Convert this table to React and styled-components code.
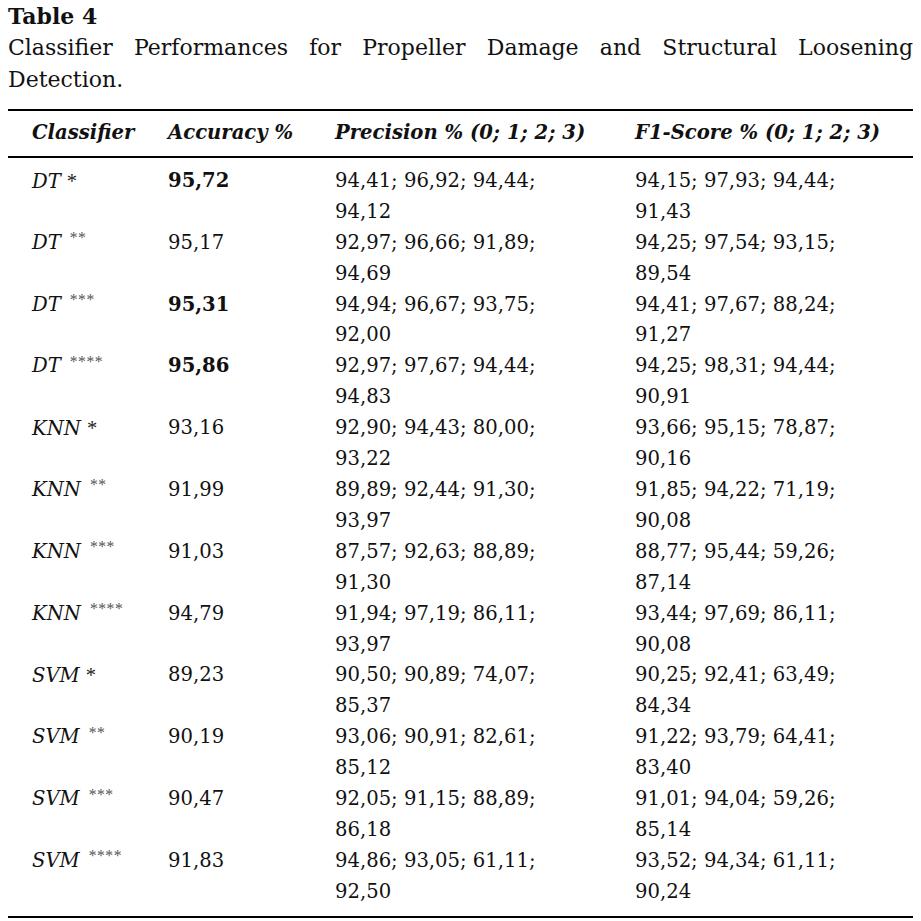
import React from "react";
import styled, { createGlobalStyle } from "styled-components";

const GlobalStyle = createGlobalStyle`
  html, body {
    margin: 0;
    padding: 0;
    background: #fff;
  }
  body {
    font-family: "DejaVu Serif", "Liberation Serif", serif;
    color: #111;
  }
`;

const rows = [
  { name: "DT", stars: 1, acc: "95,72", best: true, prec: ["94,41; 96,92; 94,44;", "94,12"], f1: ["94,15; 97,93; 94,44;", "91,43"] },
  { name: "DT", stars: 2, acc: "95,17", prec: ["92,97; 96,66; 91,89;", "94,69"], f1: ["94,25; 97,54; 93,15;", "89,54"] },
  { name: "DT", stars: 3, acc: "95,31", best: true, prec: ["94,94; 96,67; 93,75;", "92,00"], f1: ["94,41; 97,67; 88,24;", "91,27"] },
  { name: "DT", stars: 4, acc: "95,86", best: true, prec: ["92,97; 97,67; 94,44;", "94,83"], f1: ["94,25; 98,31; 94,44;", "90,91"] },
  { name: "KNN", stars: 1, acc: "93,16", prec: ["92,90; 94,43; 80,00;", "93,22"], f1: ["93,66; 95,15; 78,87;", "90,16"] },
  { name: "KNN", stars: 2, acc: "91,99", prec: ["89,89; 92,44; 91,30;", "93,97"], f1: ["91,85; 94,22; 71,19;", "90,08"] },
  { name: "KNN", stars: 3, acc: "91,03", prec: ["87,57; 92,63; 88,89;", "91,30"], f1: ["88,77; 95,44; 59,26;", "87,14"] },
  { name: "KNN", stars: 4, acc: "94,79", prec: ["91,94; 97,19; 86,11;", "93,97"], f1: ["93,44; 97,69; 86,11;", "90,08"] },
  { name: "SVM", stars: 1, acc: "89,23", prec: ["90,50; 90,89; 74,07;", "85,37"], f1: ["90,25; 92,41; 63,49;", "84,34"] },
  { name: "SVM", stars: 2, acc: "90,19", prec: ["93,06; 90,91; 82,61;", "85,12"], f1: ["91,22; 93,79; 64,41;", "83,40"] },
  { name: "SVM", stars: 3, acc: "90,47", prec: ["92,05; 91,15; 88,89;", "86,18"], f1: ["91,01; 94,04; 59,26;", "85,14"] },
  { name: "SVM", stars: 4, acc: "91,83", prec: ["94,86; 93,05; 61,11;", "92,50"], f1: ["93,52; 94,34; 61,11;", "90,24"] },
];

const Page = styled.div`
  padding: 1px 8px 0;
  width: 905px;
`;

const Title = styled.div`
  font-size: 22px;
  font-weight: bold;
  line-height: 31px;
`;

const CaptionLine = styled.div`
  font-size: 22px;
  line-height: 31.5px;
  text-align: ${(p) => (p.$justify ? "justify" : "left")};
  text-align-last: ${(p) => (p.$justify ? "justify" : "left")};
  white-space: nowrap;
`;

const Table = styled.table`
  margin-top: 14px;
  width: 905px;
  border-collapse: collapse;
  table-layout: fixed;
  font-size: 19.6px;
  line-height: 30.9px;
  border-top: 2px solid #000;
  border-bottom: 2px solid #000;

  tbody tr:first-child td {
    padding-top: 8px;
  }
  tbody tr:last-child td {
    padding-bottom: 8px;
  }
`;

const Head = styled.th`
  text-align: left;
  font-style: italic;
  font-weight: bold;
  padding: 7px 0 7px 24px;
  border-bottom: 2px solid #000;
  white-space: nowrap;
`;

const Cell = styled.td`
  vertical-align: top;
  padding: 0 0 0 24px;
  font-weight: ${(p) => (p.$bold ? "bold" : "normal")};
  white-space: nowrap;
`;

const Name = styled.span`
  font-style: italic;
`;

const Star = styled.span`
  font-family: "Liberation Serif", serif;
  font-size: 1.05em;
  margin-left: 6px;
  color: #222;
`;

const Stars = styled.sup`
  font-family: "Liberation Serif", serif;
  font-size: 0.8em;
  line-height: 0;
  vertical-align: 0.35em;
  color: #555;
  letter-spacing: 0.5px;
  margin-left: 9px;
`;

const Line = styled.div``;

const Label = ({ name, stars }) => (
  <>
    <Name>{name}</Name>
    {stars === 1 ? <Star>*</Star> : <Stars>{"*".repeat(stars)}</Stars>}
  </>
);

const App = () => (
  <Page>
    <GlobalStyle />
    <Title>Table 4</Title>
    <CaptionLine $justify>
      Classifier Performances for Propeller Damage and Structural Loosening
    </CaptionLine>
    <CaptionLine>Detection.</CaptionLine>
    <Table>
      <colgroup>
        <col style={{ width: 136 }} />
        <col style={{ width: 167 }} />
        <col style={{ width: 300 }} />
        <col style={{ width: 302 }} />
      </colgroup>
      <thead>
        <tr>
          <Head>Classifier</Head>
          <Head>Accuracy %</Head>
          <Head>Precision % (0; 1; 2; 3)</Head>
          <Head>F1-Score % (0; 1; 2; 3)</Head>
        </tr>
      </thead>
      <tbody>
        {rows.map((r, idx) => (
          <tr key={idx}>
            <Cell>
              <Label name={r.name} stars={r.stars} />
            </Cell>
            <Cell $bold={r.best}>{r.acc}</Cell>
            <Cell>
              {r.prec.map((l, i) => (
                <Line key={i}>{l}</Line>
              ))}
            </Cell>
            <Cell>
              {r.f1.map((l, i) => (
                <Line key={i}>{l}</Line>
              ))}
            </Cell>
          </tr>
        ))}
      </tbody>
    </Table>
  </Page>
);

export default App;
